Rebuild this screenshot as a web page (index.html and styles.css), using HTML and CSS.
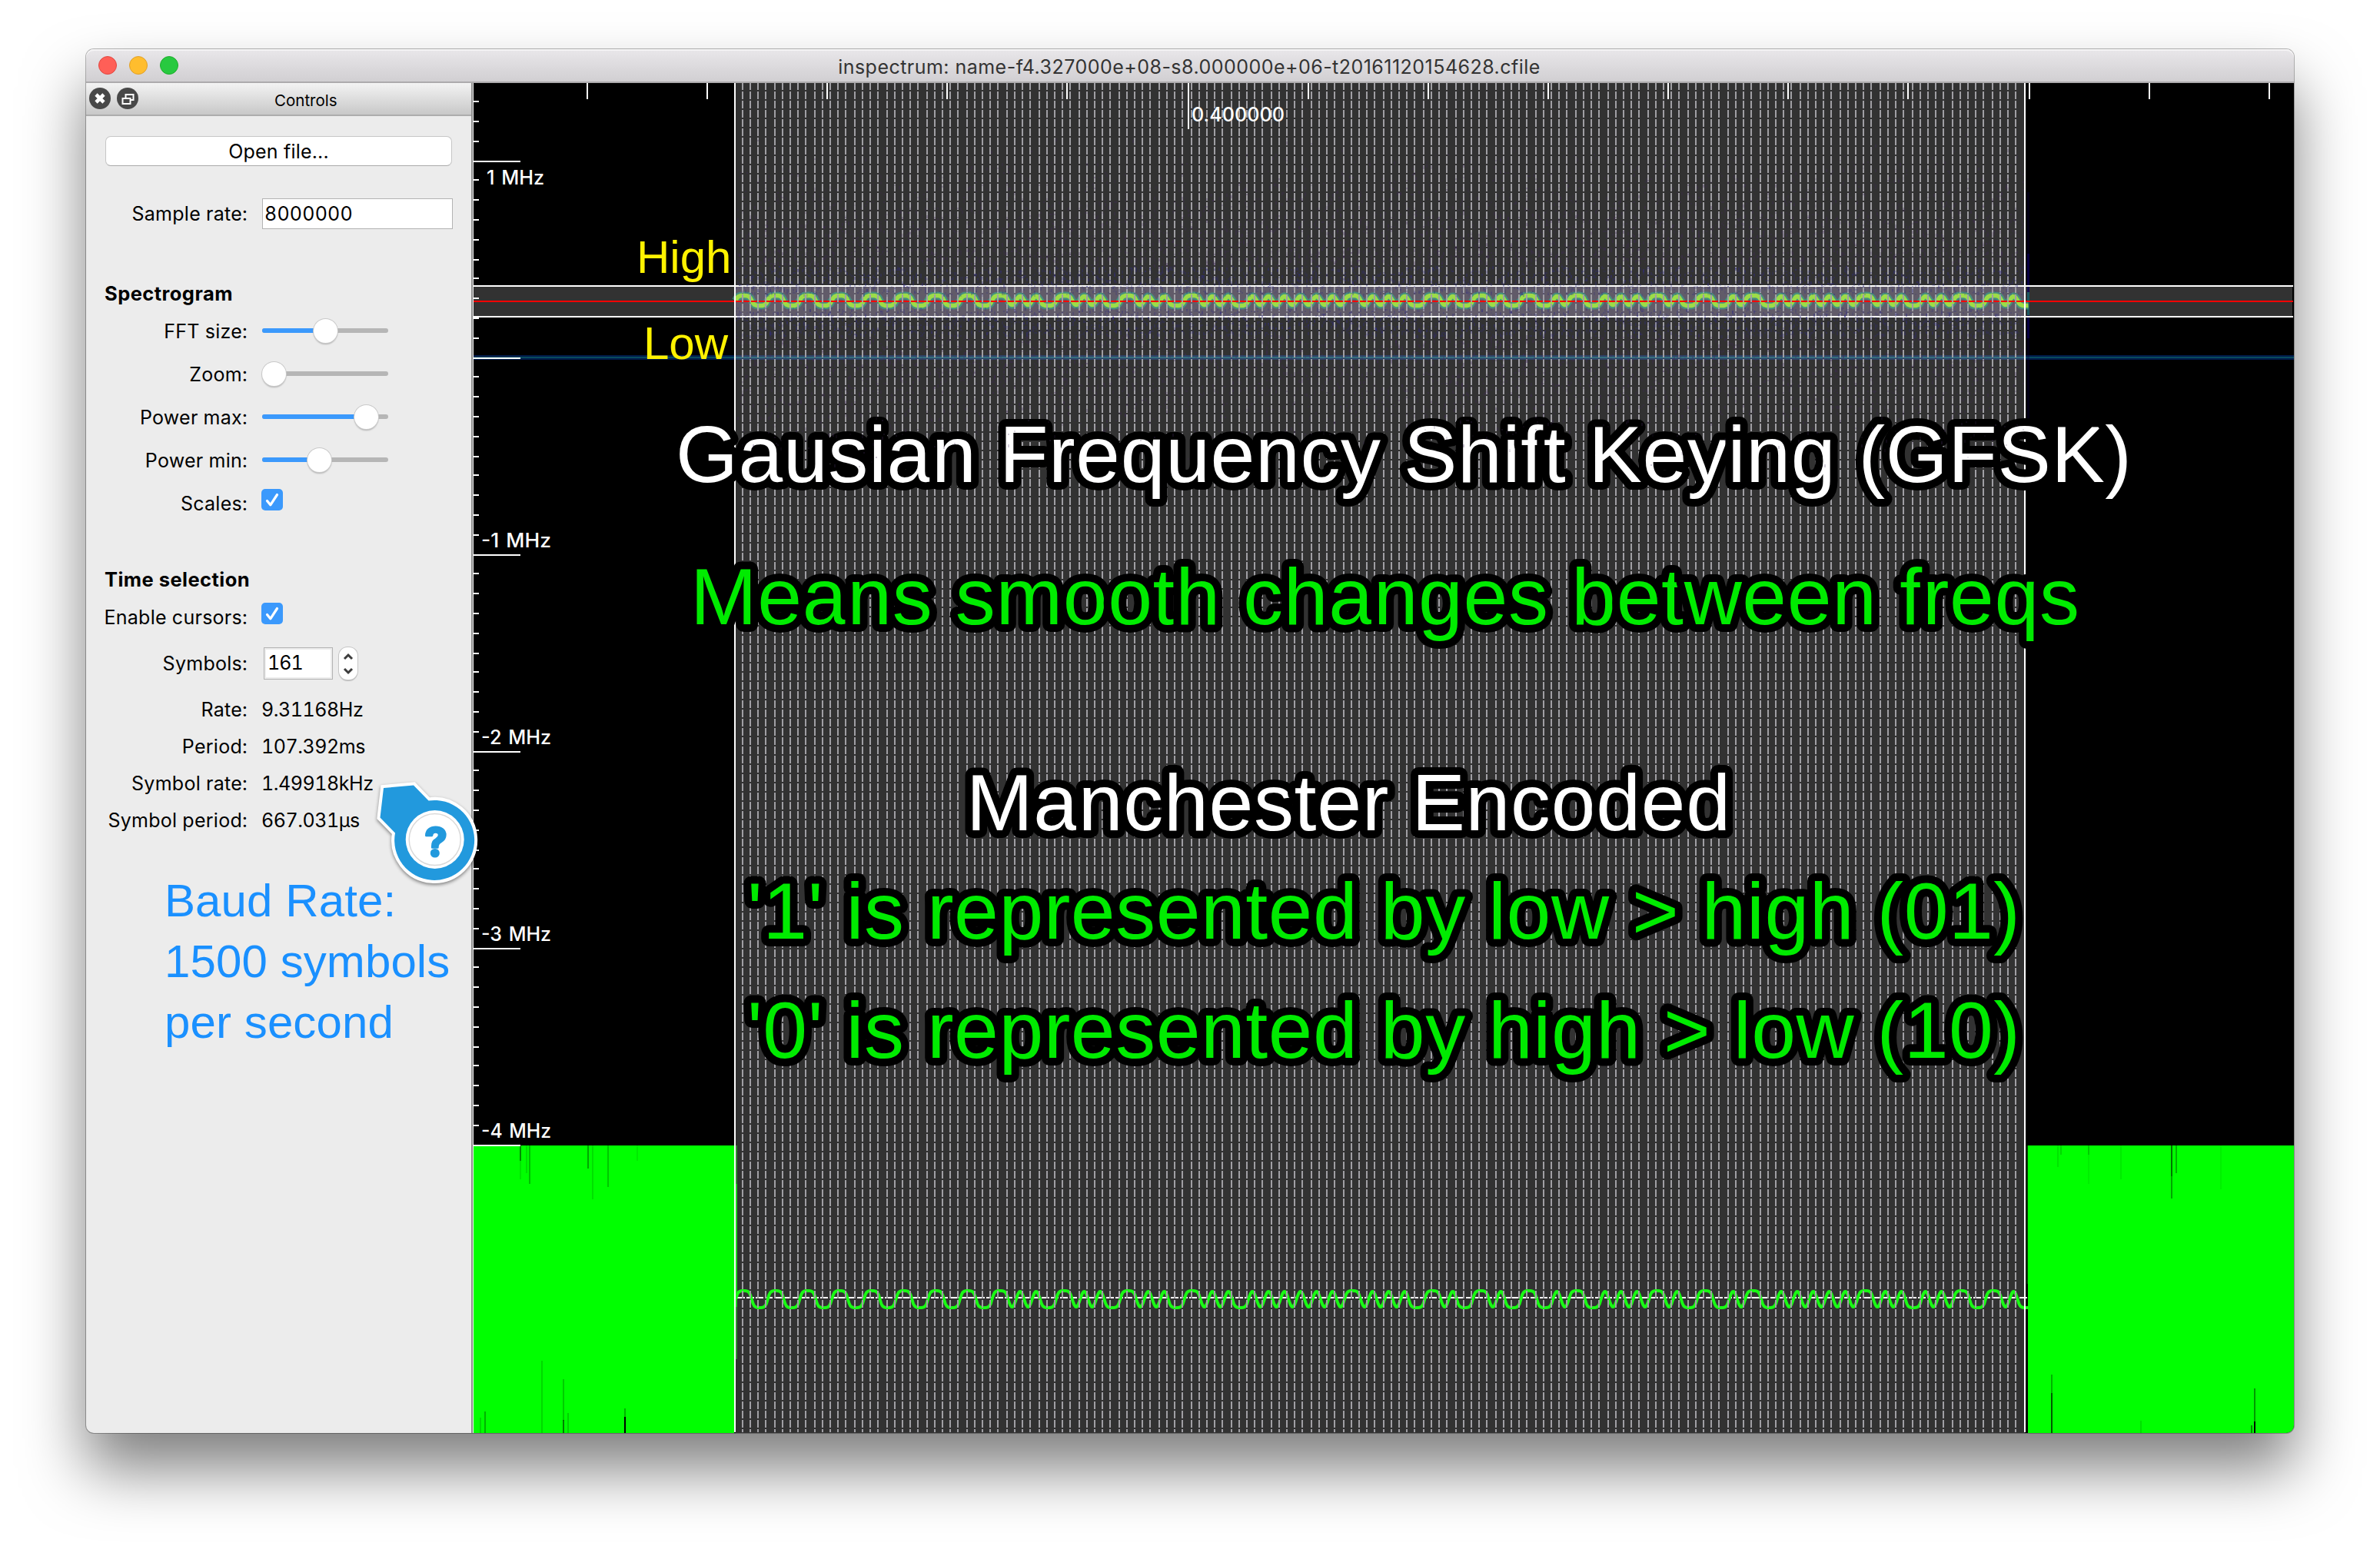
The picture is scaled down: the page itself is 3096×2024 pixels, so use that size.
FILE: index.html
```html
<!DOCTYPE html>
<html lang="en">
<head>
<meta charset="utf-8">
<title>inspectrum</title>
<link rel="stylesheet" href="styles.css">
</head>
<body>
<main class="window">
  <header class="titlebar">
    <div class="lights"><span class="light red"></span><span class="light amber"></span><span class="light green"></span></div>
    <h1 class="title">inspectrum: name-f4.327000e+08-s8.000000e+06-t20161120154628.cfile</h1>
  </header>
  <div class="content">
    <aside class="dock">
      <div class="dock-head">
        <svg class="dock-icons" width="66" height="30" viewBox="0 0 66 30">
          <circle cx="15" cy="15" r="14" fill="#484848"/>
          <path d="M10 10l10 10M20 10L10 20" stroke="#fff" stroke-width="4.6"/>
          <circle cx="51" cy="15" r="14" fill="#484848"/>
          <path d="M44.5 15h10v7h-10zM48.500 14v-4h10v7h-3" fill="none" stroke="#fff" stroke-width="2"/>
        </svg>
        <span class="dock-title">Controls</span>
      </div>
      <div class="form">
        <button class="open">Open file...</button>
        <div class="row sample"><label>Sample rate:</label><div class="field">8000000</div></div>
        <h2 class="group">Spectrogram</h2>
        <div class="row first"><label>FFT size:</label><div class="slider"><i class="fill" style="width:82px"></i><b class="knob"></b></div></div>
        <div class="row near"><label>Zoom:</label><div class="slider"><i class="fill" style="width:15px"></i><b class="knob"></b></div></div>
        <div class="row near"><label>Power max:</label><div class="slider"><i class="fill" style="width:135px"></i><b class="knob"></b></div></div>
        <div class="row near"><label>Power min:</label><div class="slider"><i class="fill" style="width:74px"></i><b class="knob"></b></div></div>
        <div class="row near"><label>Scales:</label><svg class="check" width="28" height="28" viewBox="0 0 28 28"><rect width="28" height="28" rx="5" fill="#3b99fc"/><path d="M7.500 15.500l4.300 5.300L20.500 7.500" fill="none" stroke="#fff" stroke-width="3.200" stroke-linecap="round" stroke-linejoin="round"/></svg></div>
        <h2 class="group time">Time selection</h2>
        <div class="row first"><label>Enable cursors:</label><svg class="check" width="28" height="28" viewBox="0 0 28 28"><rect width="28" height="28" rx="5" fill="#3b99fc"/><path d="M7.500 15.500l4.300 5.300L20.500 7.500" fill="none" stroke="#fff" stroke-width="3.200" stroke-linecap="round" stroke-linejoin="round"/></svg></div>
        <div class="row symbols"><label>Symbols:</label><div class="spin"><div class="field small">161</div><svg class="stepper" width="24" height="42" viewBox="0 0 24 42"><path d="M7 15l5-5 5 5M7 28l5 5 5-5" fill="none" stroke="#3c3c3c" stroke-width="3"/></svg></div></div>
        <div class="row wide"><label>Rate:</label><output>9.31168Hz</output></div>
        <div class="row tight"><label>Period:</label><output>107.392ms</output></div>
        <div class="row tight"><label>Symbol rate:</label><output>1.49918kHz</output></div>
        <div class="row tight"><label>Symbol period:</label><output>667.031µs</output></div>
        <p class="note">Baud Rate:<br>1500 symbols<br>per second</p>
      </div>
    </aside>
    <section class="plots">
      <canvas class="noise" id="noise" width="1682" height="500"></canvas>
      <svg class="scene" id="scene" viewBox="616 108 2368 1756" width="2368" height="1756"></svg>
    </section>
  </div>
</main>
<svg class="pin" width="150" height="150" viewBox="480 1005 150 150">
  <path d="M499 1025L538 1021.500L557.500 1041.500A52 52 0 1 1 514 1083.500L494.500 1063.500Z" fill="#2299dd" stroke="#fff" stroke-width="8" paint-order="stroke"/>
  <circle cx="565.700" cy="1092" r="38" fill="#fff"/>
  <circle cx="565.700" cy="1092" r="33.500" fill="none" stroke="#d9d9d9" stroke-width="1.500"/>
  <text class="pin-mark" x="567" y="1114" text-anchor="middle">?</text>
</svg>
<script src="plots.js"></script>
</body>
</html>
```
FILE: styles.css
```css
* { box-sizing: border-box; }
body {
  margin: 0;
  width: 3096px;
  height: 2024px;
  overflow: hidden;
  background: #fff;
  padding: 64px 112px 0;
  position: relative;
  font-family: Inter, "Liberation Sans", sans-serif;
  font-size: 25px;
  color: #000;
}
.window {
  width: 2872px;
  height: 1800px;
  display: flex;
  flex-direction: column;
  border-radius: 10px;
  background: #ececec;
  box-shadow: 0 0 0 1px rgba(0, 0, 0, .28), 0 47px 80px rgba(0, 0, 0, .5);
}
.titlebar {
  height: 44px;
  flex: none;
  display: flex;
  align-items: center;
  border-radius: 10px 10px 0 0;
  border-bottom: 2px solid #adabad;
  background: linear-gradient(#e9e7ea, #d1cfd2);
  box-shadow: inset 0 2px #f5f4f5;
}
.lights { display: flex; gap: 16px; padding-left: 16px; width: 300px; }
.light { width: 24px; height: 24px; border-radius: 50%; border: 1px solid; }
.red { background: #ff5f57; border-color: #e24640; }
.amber { background: #ffbd2e; border-color: #e1a026; }
.green { background: #28c940; border-color: #1dad2b; }
.title {
  flex: 1;
  margin: 3px 298px 0 -4px;
  text-align: center;
  font-size: 25px;
  font-weight: 400;
  color: #333;
  letter-spacing: .47px;
}
.content { flex: 1; display: flex; min-height: 0; }
.dock {
  width: 504px;
  flex: none;
  border-right: 1px solid #f2f2f2;
  box-shadow: inset -2px 0 #8f8f8f;
  border-bottom-left-radius: 10px;
}
.dock-head {
  width: 501px;
  height: 43px;
  display: flex;
  align-items: center;
  background: linear-gradient(#f3f3f3, #c8c8c8);
  border-bottom: 2px solid #adadad;
}
.dock-icons { margin: -1px 0 0 3px; }
.dock-title { font-size: 20.500px; margin: 3px 0 0 176px; }
.form { display: flex; flex-direction: column; padding: 26px 25px 0 0; }
.open {
  width: 451px;
  height: 39px;
  margin-left: 25px;
  padding: 0;
  border: 1px solid #c6c6c6;
  border-bottom-color: #aaa;
  border-radius: 7px;
  background: #fff;
  font: 25px Inter, sans-serif;
  letter-spacing: .2px;
  color: #000;
}
.row {
  height: 40px;
  display: grid;
  grid-template-columns: 210px 248px;
  column-gap: 19px;
  align-items: center;
  white-space: nowrap;
  font-variant-numeric: tabular-nums;
}
.row label { justify-self: end; letter-spacing: .27px; }
.row output { letter-spacing: -.45px; margin-left: -1px; }
.sample { margin-top: 42px; }
.near { margin-top: 16px; }
.first { margin-top: 9px; }
.symbols { margin-top: 19px; }
.wide { margin-top: 21px; }
.tight { margin-top: 8px; }
.group { height: 40px; line-height: 40px; margin: 64px 0 0 24px; font-size: 25.500px; font-weight: 700; letter-spacing: .45px; }
.time { margin-top: 59px; }
.field {
  height: 40px;
  line-height: 38px;
  padding-left: 2px;
  background: #fff;
  border: 1px solid #b3b3b3;
  letter-spacing: .2px;
}
.slider { display: flex; align-items: center; width: 164px; height: 6px; margin: -2px 0 0 0; border-radius: 3px; background: #b6b6b6; }
.fill { height: 6px; border-radius: 3px; background: #3b99fc; }
.knob { flex: none; width: 31px; height: 31px; margin-left: -15px; border-radius: 50%; background: #fff; box-shadow: 0 0 0 1px #c9c9c9, 0 2px 2px rgba(0, 0, 0, .25); }
.check { margin: 0 0 10px -1px; }
.spin { display: flex; gap: 8px; margin-left: 2px; }
.small { width: 90px; height: 42px; line-height: 38px; padding-left: 4px; box-shadow: inset 0 0 0 2px #ececec; letter-spacing: -1px; }
.stepper { border-radius: 11px; background: #fff; box-shadow: 0 0 0 1px #c6c6c6, 0 2px 1px rgba(0, 0, 0, .2); }
.note {
  margin: 45px 0 0 102px;
  font: 60px/79px "Liberation Sans", Arial, sans-serif;
  letter-spacing: .1px;
  color: #1a90ff;
  white-space: nowrap;
}
.plots { position: relative; flex: 1; overflow: hidden; background: #000; border-bottom-right-radius: 10px; }
.scene { position: absolute; left: 0; top: 0; }
.noise { position: absolute; z-index: 1; left: 341px; top: 0; pointer-events: none; }
.axis { font: 500 25px Inter, sans-serif; fill: #fff; word-spacing: 2px; }
.mark { font: 60px "Liberation Sans", Arial, sans-serif; fill: #fff200; }
.big {
  font: 104px "Liberation Sans", Arial, sans-serif;
  fill: #fff;
  stroke: #000;
  stroke-width: 20px;
  stroke-linejoin: round;
  paint-order: stroke;
}
.lime { fill: #00eb00; }
.pin { position: absolute; left: 480px; top: 1005px; filter: drop-shadow(0 2px 2px rgba(0, 0, 0, .45)); }
.pin-mark { font: 700 52px Inter, sans-serif; fill: #2299dd; stroke: #2299dd; stroke-width: 3px; stroke-linejoin: round; }
```
FILE: plots.js
```js
const LEFT = 956, RIGHT = 2634, SYMBOLS = 161;
const STEP = (RIGHT - LEFT) / SYMBOLS;
const even = v => 2 * Math.floor(v / 2 + 1e-6);
const out = [];
const rect = (x, y, w, h, fill, o = 1) => out.push(`<rect x="${x}" y="${y}" width="${w}" height="${h}" fill="${fill}" fill-opacity="${o}"/>`);

// Lengths, in symbols, of the alternating high/low runs of the demodulated signal.
const runs = ('2222222222222222' + '2111122111122' + '11' + '11' + '221111' + '2' + '111111111111' + '2' + '111111' +
  '22' + '11' + '22' + '11' + '222' + '11' + '22' + '111111' + '2' + '11' + '222' + '11' + '22' +
  '1111111111' + '2' + '1111' + '2' + '1111' + '222' + '11' + '2').split('').map(Number);

function wave(mid, ampWide, ampShort) {
  let x0 = LEFT + 1, sign = -1, d = `M${x0} ${mid}`;
  for (const n of runs) {
    const w = n * STEP;
    for (let i = 1; i <= 12; i++) {
      const a = Math.sin(Math.PI * i / 12);
      const s = n === 2 ? Math.tanh(2.1 * a) / Math.tanh(2.1) : a;
      const x = x0 + w * i / 12;
      if (x <= 2639) d += `L${x.toFixed(1)} ${(mid + sign * s * (n === 2 ? ampWide : ampShort)).toFixed(1)}`;
    }
    x0 += w;
    sign = -sign;
  }
  return d;
}

// Spectrogram
rect(957, 108, 1677, 1756, '#323232');
rect(616, 373, 2366, 38, '#323232');
rect(957, 373, 1677, 38, '#615b69');
rect(616, 462, 2368, 6, '#001c4c');
rect(616, 464, 2368, 2, '#084a5c');
rect(957, 462, 1677, 6, '#2f4468');
rect(957, 464, 1677, 2, '#356f7e');
rect(2637, 250, 3, 310, '#0a0048', .3);
rect(2637, 330, 3, 110, '#0a0060', .6);
rect(2637, 380, 3, 30, '#1d6a66', .8);
const tone = wave(391, 6.5, 5.5);
out.push(`<path d="${tone}" fill="none" stroke="#3f9f86" stroke-opacity=".75" stroke-width="10"/>`);
out.push(`<path d="${tone}" fill="none" stroke="#9cdc48" stroke-width="5.5"/>`);

// Frequency plot
rect(616, 1490, 339, 374, '#0f0');
rect(2638, 1490, 346, 374, '#0f0');
rect(957, 1490, 2, 278, '#2f8f2f');
rect(957, 1540, 2, 160, '#1fd41f');
const streaks = [
  [676, 1490, 20, .45], [676, 1510, 24, .1], [684, 1490, 36, .12], [688, 1490, 50, .25], [764, 1490, 30, .35],
  [770, 1490, 70, .12], [790, 1490, 54, .22], [828, 1490, 20, .08], [624, 1844, 20, .15], [630, 1836, 28, .3],
  [704, 1770, 94, .15], [732, 1794, 54, .2], [732, 1847, 17, .5], [738, 1838, 26, .18], [812, 1832, 11, .3], [812, 1843, 21, 1],
  [2676, 1490, 28, .1], [2680, 1490, 12, .15], [2716, 1490, 50, .06], [2716, 1490, 12, .15], [2758, 1490, 44, .08],
  [2824, 1490, 40, .55], [2824, 1530, 29, .35], [2830, 1490, 36, .3], [2888, 1490, 57, .06], [2668, 1788, 24, .3],
  [2668, 1812, 52, .65], [2784, 1848, 16, .12], [2928, 1854, 10, .45], [2932, 1806, 44, .4], [2932, 1849, 15, .95]
];
streaks.forEach(([x, y, h, o]) => rect(x, y, 2, h, '#000', o));
rect(2636, 1490, 2, 180, '#003c00');
out.push('<path d="M959 1688H2638" stroke="#fff" stroke-width="2" stroke-dasharray="10 2"/>');
out.push(`<path d="${wave(1690, 11, 10)}" fill="none" stroke="#19fa14" stroke-width="4"/>`);
rect(616, 391, 2367, 2, '#f00');

// Symbol cursors
let cursors = '';
for (let k = 1; k < SYMBOLS; k++) cursors += `M${even(LEFT + k * STEP)} 107V1863`;
out.push(`<path d="${cursors}" stroke="#a09fa4" stroke-width="2" stroke-dasharray="10 2"/>`);

// Tuner and selection bounds
rect(616, 371, 2367, 2, '#fff');
rect(616, 411, 2367, 2, '#fff');
rect(955, 108, 2, 1755, '#fff');
rect(2633, 108, 2, 1755, '#fff');

// Axes
for (let k = -4; k <= 50; k++) {
  const y = even(210 + 25.6 * k);
  const major = k % 10 === 0;
  rect(616, y - 1, major ? 61 : 7, 2, '#fff');
}
for (let k = 0; k < 15; k++) {
  rect(even(764.5 + 156.3 * k) - 1, 108, 2, k === 5 ? 60 : 21, '#fff');
}
const label = (x, y, w, t) => out.push(`<text class="axis" x="${x}" y="${y}" textLength="${w}" lengthAdjust="spacingAndGlyphs">${t}</text>`);
label(633, 240, 75, '1 MHz');
[1, 2, 3, 4].forEach(n => label(626, 456 + 256 * n, 91, `-${n} MHz`));
label(1550, 158, 121, '0.400000');

// Annotations
out.push('<text class="mark" x="828" y="355">High</text><text class="mark" x="837" y="467">Low</text>');
const big = (x, y, w, t, c = '') => out.push(`<text class="big ${c}" x="${x}" y="${y}" textLength="${w}">${t}</text>`);
big(879, 627, 1894, 'Gausian Frequency Shift Keying (GFSK)');
big(898, 812, 1807, 'Means smooth changes between freqs', 'lime');
big(1257, 1080, 994, 'Manchester Encoded');
big(972, 1221, 1656, "'1' is represented by low &gt; high (01)", 'lime');
big(972, 1376, 1656, "'0' is represented by high &gt; low (10)", 'lime');
document.getElementById('scene').innerHTML = out.join('');

// Faint spectral leakage around the carrier
const ctx = document.getElementById('noise').getContext('2d');
let seed = 7;
const rnd = () => (seed = (seed * 16807) % 2147483647) / 2147483647;
for (let i = 0; i < 15000; i++) {
  const off = (rnd() + rnd() + rnd() - 1.5) * 150;
  const y = 284 + off;
  if (Math.abs(off) < 9) continue;
  const near = Math.abs(off) < 45;
  ctx.fillStyle = near ? `rgba(50,45,130,${.12 + rnd() * .2})` : `rgba(66,42,92,${.1 + rnd() * .2})`;
  ctx.fillRect(even(rnd() * 1676), even(y), 2, rnd() > .6 ? 4 : 2);
}
```
